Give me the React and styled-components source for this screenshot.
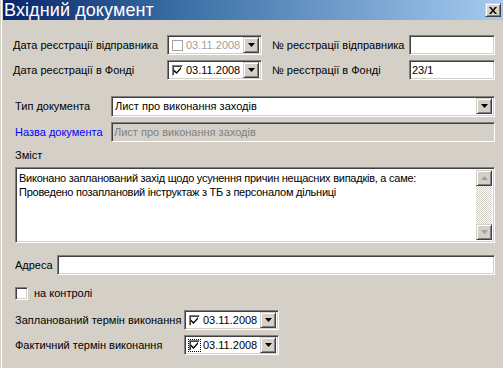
import React from 'react'
import styled, { createGlobalStyle } from 'styled-components'

const GlobalStyle = createGlobalStyle`
  html, body {
    margin: 0;
    padding: 0;
    background: #d4d0c8;
  }
  body {
    font-family: "Liberation Sans", Arial, sans-serif;
    font-size: 11px;
    color: #000;
  }
`

const FACE = '#d4d0c8'

const sunken = `
  border: 1px solid;
  border-color: #808080 #ffffff #ffffff #808080;
  box-shadow: inset 1px 1px #404040, inset -1px -1px ${FACE};
`

const raised = `
  border: 1px solid;
  border-color: ${FACE} #404040 #404040 ${FACE};
  box-shadow: inset 1px 1px #ffffff, inset -1px -1px #808080;
  background: ${FACE};
`

const Window = styled.div`
  width: 503px;
  height: 368px;
  background: ${FACE};
  box-shadow: inset 1px 0 ${FACE}, inset 2px 0 #ffffff;
  padding-left: 3px;
  box-sizing: border-box;
  overflow: hidden;
`

const TitleBar = styled.div`
  height: 20px;
  display: flex;
  align-items: center;
  justify-content: space-between;
  padding: 0 2px 0 1px;
  background: linear-gradient(to right, #0a246a 0%, #3a6ea5 35%, #a6caf0 100%);
`

const Title = styled.div`
  color: #fff;
  font-size: 18px;
  line-height: 20px;
  letter-spacing: 0.1px;
`

const CloseButton = styled.div`
  ${raised}
  width: 16px;
  height: 14px;
  box-sizing: border-box;
  display: flex;
  align-items: center;
  justify-content: center;
`

const Body = styled.div`
  padding: 15px 8px 0 9px;
  display: flex;
  flex-direction: column;
`

const Row = styled.div`
  display: flex;
  align-items: center;
  height: 20px;
  margin-top: ${(p) => p.$mt || 0}px;
`

const Label = styled.div`
  width: ${(p) => p.$w}px;
  padding-left: ${(p) => p.$pl ?? 3}px;
  box-sizing: border-box;
  flex: none;
  color: ${(p) => p.$color || '#000'};
  white-space: nowrap;
`

const DateBox = styled.div`
  ${sunken}
  width: 95px;
  height: 20px;
  box-sizing: border-box;
  background: #fff;
  display: flex;
  align-items: center;
  padding: 0 2px 0 4px;
  flex: none;
`

const SmallCheck = styled.div`
  width: 11px;
  height: 11px;
  box-sizing: border-box;
  border: 1px solid;
  border-color: ${(p) => (p.$disabled ? '#a0a0a0' : '#808080 #fff #fff #808080')};
  box-shadow: ${(p) => (p.$disabled ? 'none' : 'inset 1px 1px #404040')};
  background: #fff;
  margin-right: 3px;
  display: flex;
  align-items: center;
  justify-content: center;
  flex: none;
  outline: ${(p) => (p.$focus ? '1px dotted #000' : 'none')};
  outline-offset: 0;
`

const DateText = styled.span`
  flex: 1;
  font-size: 11px;
  color: ${(p) => (p.$disabled ? '#a0a0a0' : '#000')};
`

const DropButton = styled.div`
  ${raised}
  width: 16px;
  height: 16px;
  box-sizing: border-box;
  display: flex;
  align-items: center;
  justify-content: center;
  flex: none;
`

const TextInput = styled.div`
  ${sunken}
  height: 20px;
  box-sizing: border-box;
  background: ${(p) => (p.$disabled ? FACE : '#fff')};
  color: ${(p) => (p.$disabled ? '#808080' : '#000')};
  width: ${(p) => (p.$w ? `${p.$w}px` : 'auto')};
  flex: ${(p) => (p.$w ? 'none' : 1)};
  display: flex;
  align-items: center;
  padding: 0 2px;
  font-size: 11px;
  white-space: nowrap;
  overflow: hidden;
`

const Combo = styled.div`
  ${sunken}
  flex: 1;
  height: 21px;
  box-sizing: border-box;
  background: #fff;
  display: flex;
  align-items: center;
  padding: 0 2px 0 3px;
  font-size: 11px;
`

const ComboText = styled.span`
  flex: 1;
`

const SectionLabel = styled.div`
  margin-top: 5px;
  margin-left: 3px;
  line-height: 16px;
`

const Memo = styled.div`
  ${sunken}
  margin-top: 4px;
  margin-left: 3px;
  height: 76px;
  box-sizing: border-box;
  background: #fff;
  display: flex;
  padding: 2px;
`

const MemoText = styled.div`
  flex: 1;
  padding: 1px 0 0 1px;
  font-size: 11px;
  letter-spacing: -0.25px;
  line-height: 14px;
`

const ScrollBar = styled.div`
  width: 16px;
  display: flex;
  flex-direction: column;
  background: repeating-conic-gradient(#ffffff 0 25%, ${FACE} 0 50%) 0 0 / 2px 2px;
`

const ScrollTrack = styled.div`
  flex: 1;
`

const ScrollArrow = styled.div`
  ${raised}
  width: 16px;
  height: 16px;
  box-sizing: border-box;
  display: flex;
  align-items: center;
  justify-content: center;
`

const CheckRow = styled.div`
  display: flex;
  align-items: center;
  margin-top: 11px;
  margin-left: 3px;
  height: 14px;
`

const BigCheck = styled.div`
  width: 13px;
  height: 13px;
  box-sizing: border-box;
  border: 1px solid;
  border-color: #808080 #fff #fff #808080;
  box-shadow: inset 1px 1px #404040, inset -1px -1px ${FACE};
  background: #fff;
  margin-right: 6px;
`

const Arrow = ({ up, color = '#000' }) => (
  <svg width="7" height="4" viewBox="0 0 7 4" style={{ transform: up ? 'rotate(180deg)' : 'none' }}>
    <path d="M0 0h7L3.5 4z" fill={color} />
  </svg>
)

const Tick = () => (
  <svg width="7" height="7" viewBox="0 0 7 7">
    <path d="M0 2.5l2.5 2.5L7 0v2L2.5 7 0 4.5z" fill="#000" />
  </svg>
)

const DatePicker = ({ checked, disabled, focus }) => (
  <DateBox>
    <SmallCheck $disabled={disabled} $focus={focus}>{checked && <Tick />}</SmallCheck>
    <DateText $disabled={disabled}>03.11.2008</DateText>
    <DropButton><Arrow /></DropButton>
  </DateBox>
)

export default function App() {
  return (
    <>
      <GlobalStyle />
      <Window>
        <TitleBar>
          <Title>Вхідний документ</Title>
          <CloseButton>
            <svg width="8" height="7" viewBox="0 0 8 7">
              <path d="M0 0h2l2 2.5L6 0h2L5 3.5 8 7H6L4 4.5 2 7H0l3-3.5z" fill="#000" />
            </svg>
          </CloseButton>
        </TitleBar>
        <Body>
          <Row>
            <Label $w={155} $pl={1}>Дата реєстрації відправника</Label>
            <DatePicker disabled />
            <Label $w={147} $pl={10}>№ реєстрації відправника</Label>
            <TextInput $w={86} />
          </Row>
          <Row $mt={5}>
            <Label $w={155} $pl={1}>Дата реєстрації в Фонді</Label>
            <DatePicker checked />
            <Label $w={147} $pl={10}>№ реєстрації в Фонді</Label>
            <TextInput $w={86}>23/1</TextInput>
          </Row>
          <Row $mt={16}>
            <Label $w={99}>Тип документа</Label>
            <Combo>
              <ComboText>Лист про виконання заходів</ComboText>
              <DropButton><Arrow /></DropButton>
            </Combo>
          </Row>
          <Row $mt={6}>
            <Label $w={99} $color="#0000ff">Назва документа</Label>
            <TextInput $disabled>Лист про виконання заходів</TextInput>
          </Row>
          <SectionLabel>Зміст</SectionLabel>
          <Memo>
            <MemoText>
              Виконано запланований захід щодо усунення причин нещасних випадків, а саме:
              <br />
              Проведено позаплановий інструктаж з ТБ з персоналом дільниці
            </MemoText>
            <ScrollBar>
              <ScrollArrow><Arrow up color="#a0a0a0" /></ScrollArrow>
              <ScrollTrack />
              <ScrollArrow><Arrow color="#a0a0a0" /></ScrollArrow>
            </ScrollBar>
          </Memo>
          <Row $mt={12}>
            <Label $w={45}>Адреса</Label>
            <TextInput />
          </Row>
          <CheckRow>
            <BigCheck />
            <span>на контролі</span>
          </CheckRow>
          <Row $mt={10}>
            <Label $w={172}>Запланований термін виконання</Label>
            <DatePicker checked />
          </Row>
          <Row $mt={5}>
            <Label $w={172}>Фактичний термін виконання</Label>
            <DatePicker checked focus />
          </Row>
        </Body>
      </Window>
    </>
  )
}
